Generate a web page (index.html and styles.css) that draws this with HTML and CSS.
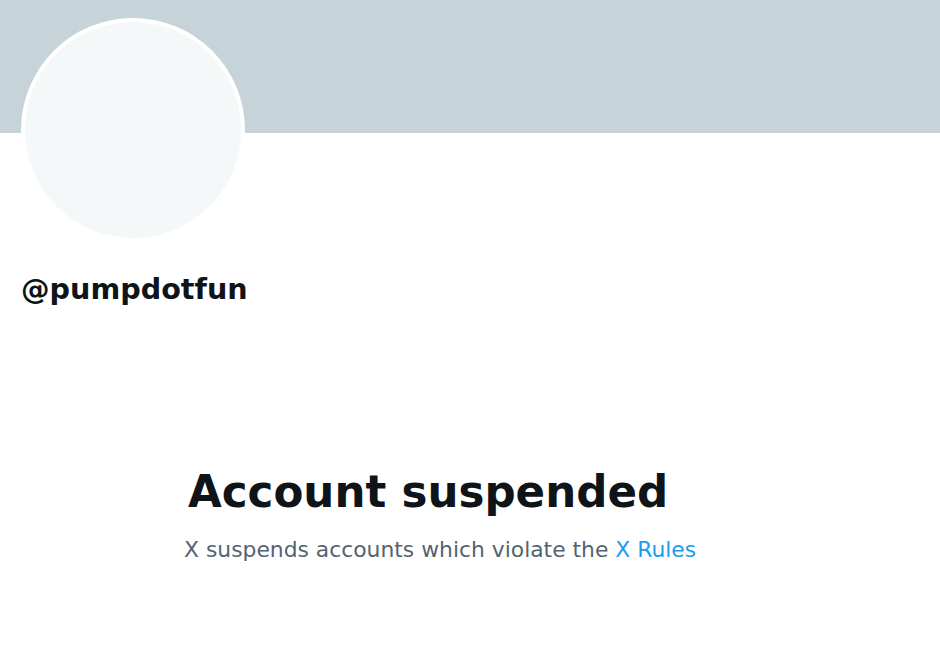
FILE: index.html
```html
<!DOCTYPE html>
<html>
<head>
<meta charset="utf-8">
<link rel="stylesheet" href="styles.css">
</head>
<body>
<div class="page">
  <div class="banner"></div>
  <div class="profile">
    <div class="avatar"></div>
    <div class="handle">@pumpdotfun</div>
  </div>
  <div class="notice">
    <h1 class="title">Account suspended</h1>
    <p class="sub">X suspends accounts which violate the <a class="link" href="#">X Rules</a></p>
  </div>
</div>
</body>
</html>
```

FILE: styles.css
```css
html, body {
  margin: 0;
  padding: 0;
  background: #ffffff;
}
.page {
  width: 940px;
  height: 656px;
  overflow: hidden;
  font-family: "DejaVu Sans", "Liberation Sans", sans-serif;
}
.banner {
  height: 133px;
  background: #c6d3d9;
}
.profile {
  margin-top: -115px;
  padding-left: 21px;
}
.avatar {
  width: 216px;
  height: 216px;
  border-radius: 50%;
  background: #f5f8f8;
  border: 4px solid #ffffff;
}
.handle {
  margin-top: 30px;
  font-size: 28.6px;
  font-weight: 700;
  color: #0f1419;
  line-height: 34px;
}
.notice {
  margin-top: 160px;
  padding-left: 184px;
}
.title {
  margin: 0 0 0 4px;
  font-size: 43.6px;
  font-weight: 700;
  color: #0f1419;
  line-height: 52px;
}
.sub {
  margin: 18px 0 0;
  font-size: 21.85px;
  color: #536471;
  line-height: 28px;
}
.link {
  color: #1d9bf0;
  text-decoration: none;
}
```
